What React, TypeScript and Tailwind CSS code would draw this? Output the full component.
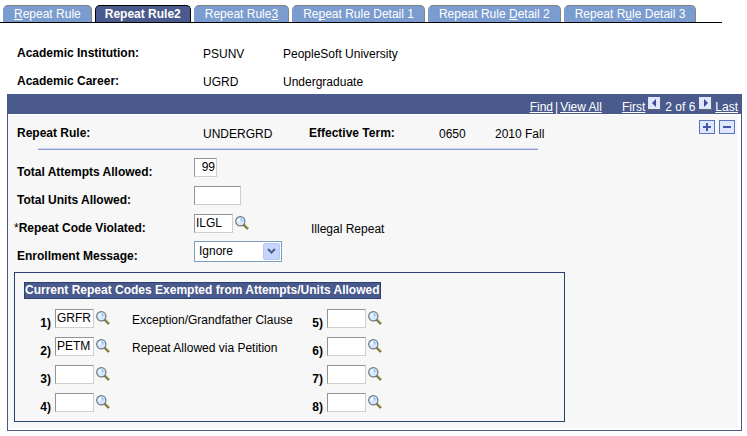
import type { ReactNode } from "react";

function Key({ children }: { children: ReactNode }) {
  return <span className="underline decoration-1 underline-offset-1 [text-decoration-skip-ink:none]">{children}</span>;
}

function Tab({ children, active = false }: { children: ReactNode; active?: boolean }) {
  return (
    <button
      type="button"
      role="tab"
      aria-selected={active}
      className={
        active
          ? "h-[17px] rounded-t-[5px] border border-b-0 border-black bg-[#4a5a8c] px-[9px] leading-4 font-bold whitespace-nowrap text-white"
          : "h-[17px] rounded-t-[5px] border border-b-0 border-l-[#7b9ccf] border-t-[#848284] border-r-[#848284] bg-[#7b9ccf] px-[10px] leading-4 whitespace-nowrap text-white"
      }
    >
      {children}
    </button>
  );
}

function SearchButton({ label }: { label: string }) {
  return (
    <button type="button" aria-label={label} className="ml-[2px] block size-[14px] shrink-0">
      <svg width="14" height="14" viewBox="0 0 14 14" className="block">
        <path d="M8.4 8.4 13 13" stroke="#5c5a2c" strokeWidth="2.2" />
        <path d="M9 8.2 13.4 12.6" stroke="#b5aa52" strokeWidth="1.1" />
        <circle cx="5.3" cy="5.3" r="4.6" fill="#d3e9fd" stroke="#70757f" strokeWidth="1.2" />
        <path d="M2 5.8a3.4 3.4 0 0 1 3.6-3.9L4.9 5.3z" fill="#f6fbff" />
        <path d="M5.4 2a3.4 3.4 0 0 1 3.2 3.2L5.4 5.2z" fill="#a5d0fa" />
      </svg>
    </button>
  );
}

const box =
  "h-[19px] shrink-0 border border-t-[#949494] border-l-[#949494] border-r-[#cecece] border-b-[#cecece] bg-white text-black outline-none";

function InfoRow({ label, code, text }: { label: string; code: string; text: string }) {
  return (
    <div className="flex h-7 items-center">
      <dt className="w-[186px] pt-px font-bold">{label}</dt>
      <dd className="w-20 pt-[3px]">{code}</dd>
      <dd className="pt-[3px]">{text}</dd>
    </div>
  );
}

function Field({ label, id, children }: { label: ReactNode; id: string; children: ReactNode }) {
  return (
    <div className="flex h-7 items-center">
      <label htmlFor={id} className="w-[180px] pt-[9px] pl-[3px] font-bold">
        {label}
      </label>
      {children}
    </div>
  );
}

function CodeRow({ n, code = "", text = "" }: { n: number; code?: string; text?: string }) {
  const id = `exempt-${n}`;
  return (
    <div className="flex h-7 items-center">
      <label htmlFor={id} className="w-[31px] shrink-0 pt-[9px] pr-1 text-right font-bold">
        {n})
      </label>
      <input id={id} defaultValue={code} className={`${box} w-[39px] px-px`} />
      <SearchButton label={`Look up repeat code ${n}`} />
      {text && <span className="ml-[22px] pt-1 whitespace-nowrap">{text}</span>}
    </div>
  );
}

function Arrow({ label, points }: { label: string; points: string }) {
  return (
    <button type="button" aria-label={label} className="mb-1 size-[13px] bg-[#dee7ff]">
      <svg width="13" height="13" viewBox="0 0 13 13" className="block">
        <path d="M0 12.5h12.5V0" fill="none" stroke="#5f6368" />
        <polygon points={points} fill="#3a4a94" />
      </svg>
    </button>
  );
}

function RowButton({ label, d }: { label: string; d: string }) {
  return (
    <button type="button" aria-label={label} className="h-[14px] w-4 border border-[#5a73bd] bg-[#dee7ff]">
      <svg width="14" height="12" viewBox="0 0 14 12" className="block">
        <path d={d} stroke="#4257a5" strokeWidth="2" />
      </svg>
    </button>
  );
}

const link = "underline decoration-1 underline-offset-1";

export default function App() {
  return (
    <main className="bg-white pb-[5px] font-['Liberation_Sans',Arial,sans-serif] text-[12px] leading-4 text-black">
      <nav role="tablist" className="mr-[25px] flex items-end gap-[3px] border-b border-black pt-[5px] pl-[3px]">
        <Tab>
          <Key>R</Key>epeat Rule
        </Tab>
        <Tab active>Repeat Rule2</Tab>
        <Tab>
          Repeat Rule<Key>3</Key>
        </Tab>
        <Tab>
          Re<Key>p</Key>eat Rule Detail 1
        </Tab>
        <Tab>
          Repeat Rule <Key>D</Key>etail 2
        </Tab>
        <Tab>
          Repeat R<Key>u</Key>le Detail 3
        </Tab>
      </nav>

      <dl className="pt-[15px] pl-[17px]">
        <InfoRow label="Academic Institution:" code="PSUNV" text="PeopleSoft University" />
        <InfoRow label="Academic Career:" code="UGRD" text="Undergraduate" />
      </dl>

      <section className="mr-[5px] ml-[7px] border border-[#4a5a8c] bg-white">
        <header className="flex h-[19px] items-end justify-end bg-[#4a5a8c] pr-[3px] leading-[14px] text-white">
          <a href="#find" className={link}>Find</a>
          <span className="mx-[2px]">|</span>
          <a href="#all" className={link}>View All</a>
          <a href="#first" className={`${link} ml-5`}>First</a>
          <span className="mx-[3px] flex items-end gap-1">
            <Arrow label="Previous" points="8,2 8,10 4,6" />
            <span>2 of 6</span>
            <Arrow label="Next" points="5,2 5,10 9,6" />
          </span>
          <a href="#last" className={link}>Last</a>
        </header>

        <div className="mt-px mr-[3px] mb-[2px] bg-[#f7f7f7] pb-[6px] pl-[6px]">
          <div className="flex h-[33px]">
            <dl className="flex items-center pl-[3px]">
              <dt className="w-[186px] pt-[2px] font-bold">Repeat Rule:</dt>
              <dd className="w-[106px] pt-1">UNDERGRD</dd>
              <dt className="w-[130px] pt-[2px] font-bold">Effective Term:</dt>
              <dd className="w-14 pt-1">0650</dd>
              <dd className="pt-1">2010 Fall</dd>
            </dl>
            <div className="ml-auto flex gap-1 pt-[5px] pr-[3px]">
              <RowButton label="Add row" d="M3 6h8M7 2v8" />
              <RowButton label="Delete row" d="M3 6h8" />
            </div>
          </div>
          <hr className="ml-6 h-[2px] w-[500px] border-t border-b border-t-[#ced7ef] border-b-[#8c9ece]" />

          <div className="pt-[3px]">
            <Field label="Total Attempts Allowed:" id="attempts">
              <input id="attempts" defaultValue="99" className={`${box} w-[23px] px-px text-right`} />
            </Field>
            <Field label="Total Units Allowed:" id="units">
              <input id="units" className={`${box} w-[47px] px-px`} />
            </Field>
            <Field label={<><span className="-ml-[3px] font-normal">*</span>Repeat Code Violated:</>} id="violated">
              <input id="violated" defaultValue="ILGL" className={`${box} w-[39px] px-px`} />
              <SearchButton label="Look up repeat code" />
              <span className="ml-[62px] pt-3">Illegal Repeat</span>
            </Field>
            <Field label="Enrollment Message:" id="message">
              <div className="relative">
                <select
                  id="message"
                  className="block h-[21px] w-[88px] appearance-none border border-[#7b9ebd] bg-white pl-1 text-black outline-none"
                >
                  <option>Ignore</option>
                </select>
                <span className="pointer-events-none absolute top-[2px] right-[2px] flex h-[17px] w-[17px] items-center justify-center rounded-[2px] border border-[#b5c7f7] bg-[#c6d5fd]">
                  <svg width="9" height="6" viewBox="0 0 9 6">
                    <path d="M1 1l3.5 3.5L8 1" fill="none" stroke="#4a6184" strokeWidth="2" />
                  </svg>
                </span>
              </div>
            </Field>
          </div>

          <section className="mt-[7px] w-[551px] border border-[#294173] pt-[9px] pb-[5px] pl-[9px]">
            <h2 className="h-[17px] w-fit border border-[#294173] bg-[#4a5a8c] font-bold leading-[15px] whitespace-nowrap text-white">
              Current Repeat Codes Exempted from Attempts/Units Allowed
            </h2>
            <div className="flex pt-[5px]">
              <div className="w-[272px]">
                <CodeRow n={1} code="GRFR" text="Exception/Grandfather Clause" />
                <CodeRow n={2} code="PETM" text="Repeat Allowed via Petition" />
                <CodeRow n={3} />
                <CodeRow n={4} />
              </div>
              <div>
                <CodeRow n={5} />
                <CodeRow n={6} />
                <CodeRow n={7} />
                <CodeRow n={8} />
              </div>
            </div>
          </section>
        </div>
      </section>
    </main>
  );
}
